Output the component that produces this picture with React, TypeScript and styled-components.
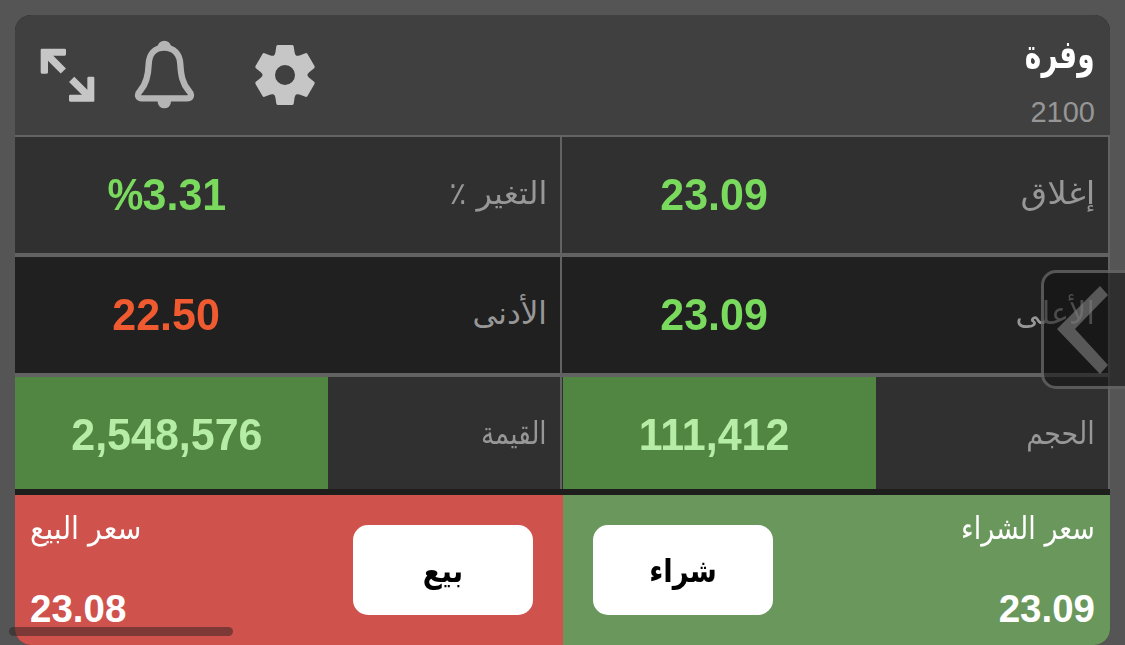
import React from "react";
import styled, { createGlobalStyle } from "styled-components";

const Global = createGlobalStyle`
  * { box-sizing: border-box; }
  body { margin: 0; background: #555; overflow: hidden; font-family: "Liberation Sans", "DejaVu Sans", sans-serif; }
`;

const Page = styled.main`
  position: relative;
  height: 645px;
  padding: 15px 15px 0;
  overflow: hidden;
`;

const Card = styled.section`
  display: flex;
  flex-direction: column;
  height: 630px;
  border-radius: 16px;
  overflow: hidden;
  background: #202020;
`;

const Header = styled.header`
  display: flex;
  justify-content: space-between;
  height: 122px;
  background: #404040;
  border-bottom: 2px solid #646464;
`;

const Tools = styled.div`
  display: flex;
  align-items: center;
  padding-left: 25px;
`;

const Tool = styled.svg<{ $gap?: number }>`
  display: block;
  margin-left: ${(p) => p.$gap ?? 0}px;
`;

const Identity = styled.div`
  display: flex;
  flex-direction: column;
  align-items: flex-end;
  padding: 17px 15px 0 0;
`;

const Name = styled.h1`
  margin: 0;
  height: 60px;
  font: bold 40px/44px "DejaVu Sans", sans-serif;
  color: #fff;
  transform: scaleX(0.7);
  transform-origin: right;
`;

const Code = styled.span`
  font-size: 29px;
  line-height: 40px;
  color: #969696;
`;

const Row = styled.div<{ $bg: string; $h: number; $last?: boolean }>`
  display: grid;
  grid-template-columns: 548px 547px;
  height: ${(p) => p.$h}px;
  background: ${(p) => p.$bg};
  border-bottom: ${(p) => (p.$last ? "6px solid #1e1f1c" : "4px solid #626262")};
  ${(p) => p.$last && "& span { margin-top: 4px; }"}
`;

const Cell = styled.div<{ $edge?: boolean }>`
  display: flex;
  align-items: center;
  justify-content: space-between;
  border-right: 2px solid #626262;
  margin-right: ${(p) => (p.$edge ? 0 : 1)}px;
`;

const ValueBox = styled.div<{ $filled?: boolean }>`
  display: flex;
  align-items: center;
  justify-content: center;
  align-self: stretch;
  width: 313px;
  padding-right: 10px;
  background: ${(p) => (p.$filled ? "#508542" : "transparent")};
`;

const Value = styled.span<{ $color: string }>`
  font-size: 44px;
  font-weight: bold;
  line-height: 50px;
  color: ${(p) => p.$color};
  transform: scaleX(0.977);
`;

const Percent = styled.small`
  display: inline-block;
  font-size: inherit;
  width: 36px;
  transform: scaleX(0.94);
  transform-origin: left;
`;

const Label = styled.span<{ $fit?: number; $light?: boolean; $from?: string }>`
  font-family: "DejaVu Sans", sans-serif;
  font-size: 31px;
  line-height: 40px;
  white-space: nowrap;
  color: ${(p) => (p.$light ? "#fff" : "#979797")};
  margin-right: ${(p) => (p.$light ? 0 : 13)}px;
  padding-bottom: ${(p) => (p.$light ? 0 : 5)}px;
  transform: scaleX(${(p) => p.$fit ?? 1});
  transform-origin: ${(p) => p.$from ?? "right"};
`;

const Trade = styled.div`
  display: grid;
  grid-template-columns: 548px 547px;
  height: 150px;
`;

const Side = styled.div<{ $buy?: boolean }>`
  display: flex;
  flex-direction: ${(p) => (p.$buy ? "row-reverse" : "row")};
  justify-content: space-between;
  padding: ${(p) => (p.$buy ? "0 15px 0 30px" : "0 30px 0 15px")};
  background: ${(p) => (p.$buy ? "#6a975b" : "#cf524c")};
`;

const Quote = styled.div<{ $buy?: boolean }>`
  display: flex;
  flex-direction: column;
  align-items: ${(p) => (p.$buy ? "flex-end" : "flex-start")};
  padding-top: 13px;
`;

const Price = styled.span`
  margin-top: 39px;
  font-size: 38.5px;
  font-weight: bold;
  line-height: 44px;
  color: #fff;
`;

const Action = styled.button`
  width: 180px;
  height: 90px;
  margin-top: 30px;
  padding: 0;
  border: 0;
  border-radius: 15px;
  background: #fff;
  color: #000;
  font: bold 32px/40px "DejaVu Sans", sans-serif;
`;

const ActionText = styled.span`
  display: block;
  padding-top: 2px;
  transform: scaleX(0.86);
`;

const Drawer = styled.div`
  position: absolute;
  left: 1041px;
  top: 270px;
  width: 100px;
  height: 119px;
  border: 3px solid rgba(128, 128, 128, 0.6);
  border-radius: 15px;
  background: rgba(17, 17, 17, 0.56);
`;

const Chevron = styled.svg`
  display: block;
  filter: blur(0.7px);
`;

const Scrollbar = styled.div`
  position: absolute;
  left: 9px;
  top: 627px;
  width: 224px;
  height: 9px;
  border-radius: 5px;
  background: rgba(48, 34, 34, 0.52);
`;

const GREEN = "#79da5e";
const PALE = "#b6eda6";

const ExpandIcon = () => (
  <Tool width="56" height="56" viewBox="120 142 168 168" fill="none" stroke="#c6c6c6" strokeWidth="22" strokeLinejoin="round">
    <path d="M138 162L190 214" />
    <path d="M215 239L267 291" />
    <path d="M125 147H194Q198 147 198 151V164Q198 168 194 168H144V218Q144 222 140 222H126Q122 222 122 218V150Q122 147 125 147Z" fill="#c6c6c6" stroke="none" />
    <path d="M280 306H211Q207 306 207 302V289Q207 285 211 285H262V235Q262 231 266 231H279Q283 231 283 235V303Q283 306 280 306Z" fill="#c6c6c6" stroke="none" />
  </Tool>
);

const BellIcon = () => (
  <Tool $gap={38} width="62" height="70" viewBox="402 120 186 210" fill="none">
    <circle cx="493" cy="142" r="20" fill="#b5b5b5" />
    <circle cx="493" cy="305" r="20" fill="#b5b5b5" />
    <path
      d="M493 143C463 143 447 164 446 193C445 226 440 250 421 272C409 285 414 295 426 295H560C573 295 578 285 566 272C547 250 543 226 541 193C540 164 523 143 493 143Z"
      fill="#404040"
      stroke="#b5b5b5"
      strokeWidth="19"
    />
  </Tool>
);

const GearIcon = () => (
  <Tool $gap={58} width="62" height="62" viewBox="-93 -93 186 186" fill="#c6c6c6">
    <circle r="48" fill="none" stroke="#c6c6c6" strokeWidth="36" />
    {[0, 60, 120, 180, 240, 300].map((a) => (
      <path key={a} transform={`rotate(${a})`} d="M-37-54Q-30-60-29-67L-26-86Q-25-90-21-90H21Q25-90 26-86L29-67Q30-60 37-54Z" />
    ))}
  </Tool>
);

export default function App() {
  return (
    <Page>
      <Global />
      <Card>
        <Header>
          <Tools>
            <ExpandIcon />
            <BellIcon />
            <GearIcon />
          </Tools>
          <Identity>
            <Name dir="rtl">وفرة</Name>
            <Code>2100</Code>
          </Identity>
        </Header>
        <Row $bg="#303030" $h={120}>
          <Cell>
            <ValueBox><Value $color={GREEN}><Percent>%</Percent>3.31</Value></ValueBox>
            <Label dir="rtl" $fit={1.03}>التغير ٪</Label>
          </Cell>
          <Cell $edge>
            <ValueBox><Value $color={GREEN}>23.09</Value></ValueBox>
            <Label dir="rtl" $fit={1.11}>إغلاق</Label>
          </Cell>
        </Row>
        <Row $bg="#202020" $h={120}>
          <Cell>
            <ValueBox><Value $color="#f05a30">22.50</Value></ValueBox>
            <Label dir="rtl">الأدنى</Label>
          </Cell>
          <Cell $edge>
            <ValueBox><Value $color={GREEN}>23.09</Value></ValueBox>
            <Label dir="rtl" $fit={0.98}>الأعلى</Label>
          </Cell>
        </Row>
        <Row $bg="#303030" $h={118} $last>
          <Cell>
            <ValueBox $filled><Value $color={PALE}>2,548,576</Value></ValueBox>
            <Label dir="rtl" $fit={0.845}>القيمة</Label>
          </Cell>
          <Cell $edge>
            <ValueBox $filled><Value $color={PALE}>111,412</Value></ValueBox>
            <Label dir="rtl" $fit={0.87}>الحجم</Label>
          </Cell>
        </Row>
        <Trade>
          <Side>
            <Quote>
              <Label $light dir="rtl" $fit={0.92} $from="left">سعر البيع</Label>
              <Price>23.08</Price>
            </Quote>
            <Action dir="rtl"><ActionText>بيع</ActionText></Action>
          </Side>
          <Side $buy>
            <Quote $buy>
              <Label $light dir="rtl" $fit={0.87}>سعر الشراء</Label>
              <Price>23.09</Price>
            </Quote>
            <Action dir="rtl"><ActionText>شراء</ActionText></Action>
          </Side>
        </Trade>
      </Card>
      <Drawer>
        <Chevron width="70" height="113" viewBox="0 0 70 113" fill="#808080" fillOpacity="0.62">
          <path d="M13 56L56 13L64 22L31 56L64 92L56 101Z" />
        </Chevron>
      </Drawer>
      <Scrollbar />
    </Page>
  );
}
